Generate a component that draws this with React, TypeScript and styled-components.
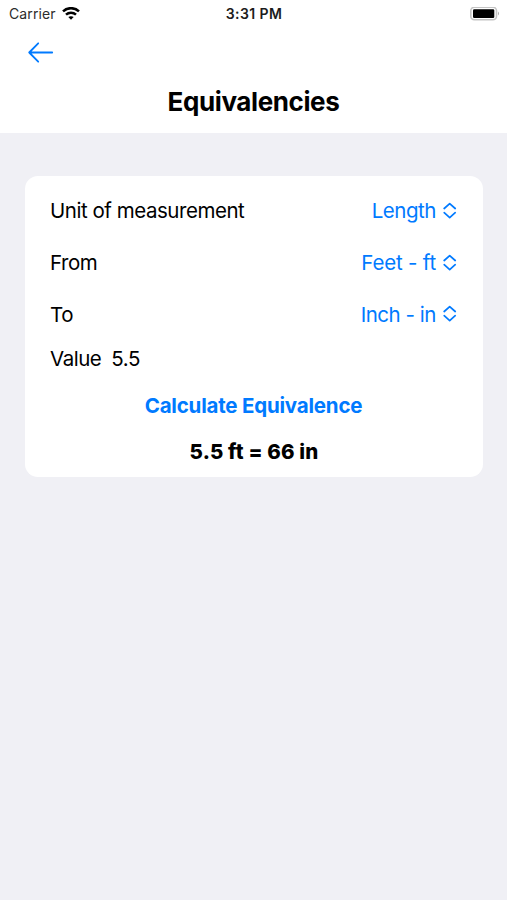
import React from 'react';
import styled, { createGlobalStyle } from 'styled-components';

const Global = createGlobalStyle`
  * { box-sizing: border-box; }
  body { margin: 0; background: #f0f0f5; font-family: Inter, sans-serif; color: #000; }
`;

const Screen = styled.main`
  height: 900px;
  overflow: hidden;
  background: #f0f0f5;
`;

const Header = styled.header`
  height: 133px;
  background: #fff;
`;

const StatusBar = styled.div`
  display: grid;
  grid-template-columns: 1fr auto 1fr;
  align-items: center;
  height: 27px;
  padding: 0 7px 0 9px;
`;

const Carrier = styled.div`
  display: flex;
  align-items: center;
  gap: 6px;
  color: #2c2c2c;
  font-size: 14px;
  letter-spacing: 0.1px;
`;

const Time = styled.time`
  padding-right: 1px;
  color: #1c1c1c;
  font-size: 14px;
  font-weight: 600;
  letter-spacing: 0.4px;
`;

const Battery = styled.svg`
  justify-self: end;
`;

const BackButton = styled.button`
  display: flex;
  margin: 14px 0 0 27px;
  padding: 0;
  border: 0;
  background: none;
  color: #007aff;
`;

const Title = styled.h1`
  margin: 21px 0 0;
  text-align: center;
  font-size: 26px;
  line-height: 32px;
  font-weight: 700;
  letter-spacing: -0.4px;
`;

const Card = styled.section`
  margin: 43px 24px 0 25px;
  height: 301px;
  padding: 9px 26px 0 25px;
  border-radius: 13px;
  background: #fff;
  font-size: 20.5px;
  letter-spacing: -0.46px;
`;

const Row = styled.div`
  display: flex;
  align-items: center;
  justify-content: space-between;
  height: 51.7px;
`;

const Picker = styled.button<{ $tracking: number }>`
  display: flex;
  align-items: center;
  gap: 7px;
  padding: 0;
  border: 0;
  background: none;
  color: #007aff;
  font: inherit;
  letter-spacing: ${(p) => p.$tracking}px;
`;

const ValueRow = styled.div`
  display: flex;
  align-items: center;
  gap: 10px;
  height: 37px;
`;

const Calculate = styled.button`
  display: block;
  width: 100%;
  height: 56px;
  padding: 0;
  border: 0;
  background: none;
  color: #007aff;
  font: inherit;
  font-weight: 700;
  letter-spacing: -0.2px;
`;

const Result = styled.div`
  height: 38px;
  line-height: 38px;
  padding-left: 1px;
  text-align: center;
  font-weight: 800;
  letter-spacing: 0.15px;
`;

const rows = [
  { label: 'Unit of measurement', value: 'Length', tracking: -0.46 },
  { label: 'From', value: 'Feet - ft', tracking: -0.2 },
  { label: 'To', value: 'Inch - in', tracking: -0.46 },
];

function Chevrons() {
  return (
    <svg width="14" height="18" viewBox="0 0 14 18" fill="none" stroke="currentColor" strokeWidth="1.7" strokeLinecap="round" strokeLinejoin="round">
      <path d="M1.2 6.5 6.7 1.6l5.5 4.9M1.2 10.7l5.5 4.9 5.5-4.9" />
    </svg>
  );
}

export default function App() {
  return (
    <Screen>
      <Global />
      <Header>
        <StatusBar>
          <Carrier>
            <span>Carrier</span>
            <svg width="18" height="14" viewBox="0 0 18 14" fill="none" stroke="#000" strokeWidth="2.5">
              <path d="M1 4.3c4.5-4.2 11.5-4.2 16 0M4 7.6c2.8-2.6 7.2-2.6 10 0" />
              <path d="M6.3 10.1c1.5-1.3 3.9-1.3 5.4 0L9 12.8Z" fill="#000" stroke="none" />
            </svg>
          </Carrier>
          <Time>3:31 PM</Time>
          <Battery width="30" height="14" viewBox="0 0 30 14">
            <rect x=".8" y=".3" width="25.7" height="12.4" rx="3.5" fill="none" stroke="#c4c4c4" strokeWidth="1.6" />
            <rect x="3" y="2.2" width="21.3" height="8.8" rx="1.2" />
            <path d="M28 4.5q2 2 0 4Z" fill="#aaa" />
          </Battery>
        </StatusBar>
        <BackButton aria-label="Back">
          <svg width="27" height="24" viewBox="0 0 27 24" fill="none" stroke="currentColor" strokeWidth="1.8" strokeLinecap="round" strokeLinejoin="round">
            <path d="M25.2 11.5H2.2M11.2 2.3l-9 9.2 9 9.2" />
          </svg>
        </BackButton>
        <Title>Equivalencies</Title>
      </Header>
      <Card>
        {rows.map((row) => (
          <Row key={row.label}>
            <span>{row.label}</span>
            <Picker $tracking={row.tracking}>{row.value}<Chevrons /></Picker>
          </Row>
        ))}
        <ValueRow><span>Value</span><span>5.5</span></ValueRow>
        <Calculate>Calculate Equivalence</Calculate>
        <Result>5.5 ft = 66 in</Result>
      </Card>
    </Screen>
  );
}
